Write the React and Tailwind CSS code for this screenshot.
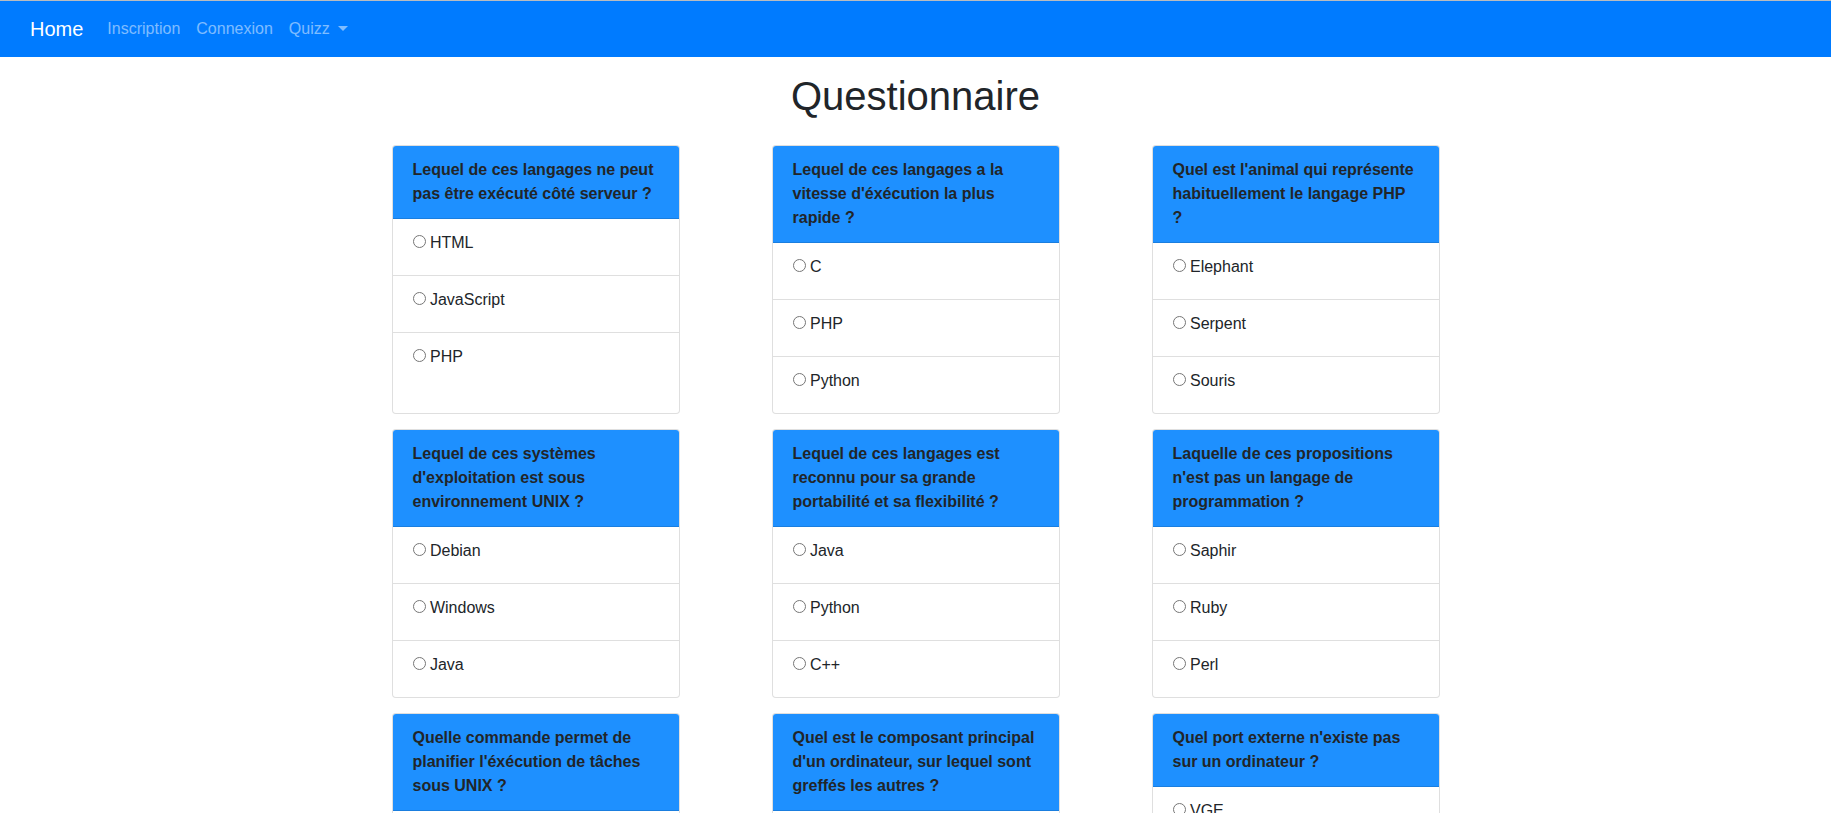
const questions = [
  { title: "Lequel de ces langages ne peut pas être exécuté côté serveur ?", options: ["HTML", "JavaScript", "PHP"] },
  { title: "Lequel de ces langages a la vitesse d'éxécution la plus rapide ?", options: ["C", "PHP", "Python"] },
  { title: "Quel est l'animal qui représente habituellement le langage PHP ?", options: ["Elephant", "Serpent", "Souris"] },
  { title: "Lequel de ces systèmes d'exploitation est sous environnement UNIX ?", options: ["Debian", "Windows", "Java"] },
  { title: "Lequel de ces langages est reconnu pour sa grande portabilité et sa flexibilité ?", options: ["Java", "Python", "C++"] },
  { title: "Laquelle de ces propositions n'est pas un langage de programmation ?", options: ["Saphir", "Ruby", "Perl"] },
  { title: "Quelle commande permet de planifier l'éxécution de tâches sous UNIX ?", options: [] },
  { title: "Quel est le composant principal d'un ordinateur, sur lequel sont greffés les autres ?", options: [] },
  { title: "Quel port externe n'existe pas sur un ordinateur ?", options: ["VGE"] },
];

function NavBar() {
  return (
    <nav className="flex h-[57px] items-center border-t border-[#b9bcc0] bg-[#007bff] px-[30px] text-white/50">
      <a href="#home" className="mr-4 text-xl leading-[30px] text-white">Home</a>
      <a href="#inscription" className="p-2">Inscription</a>
      <a href="#connexion" className="p-2">Connexion</a>
      <button type="button" aria-haspopup="menu" className="flex items-center gap-2 p-2">
        Quizz
        <svg width="10" height="7" viewBox="0 0 10 7" fill="currentColor" aria-hidden="true">
          <path d="M0 0h10L5 5z" />
        </svg>
      </button>
    </nav>
  );
}

function QuestionCard({ index, title, options }) {
  const titleId = `question-${index}`;
  return (
    <section
      role="radiogroup"
      aria-labelledby={titleId}
      className="w-72 rounded border border-black/[.125] bg-white bg-clip-border"
    >
      <h2 id={titleId} className="rounded-t-[3px] border-b border-black/[.125] bg-[#1e90ff] px-5 py-3 font-bold">
        {title}
      </h2>
      <ul className="divide-y divide-black/[.125]">
        {options.map((option) => (
          <li key={option} className="px-5 pt-3 pb-5">
            <label className="block">
              <input type="radio" name={titleId} value={option} /> {option}
            </label>
          </li>
        ))}
      </ul>
    </section>
  );
}

export default function App() {
  return (
    <div className="bg-white font-['Liberation_Sans',Arial,sans-serif] text-base leading-6 text-[#212529]">
      <NavBar />
      <main>
        <h1 className="mt-[15px] mb-[25px] text-center text-[40px] leading-[48px]">Questionnaire</h1>
        <form className="mx-auto grid max-w-[1140px] grid-cols-3 justify-items-center gap-y-[15px]">
          {questions.map((question, index) => (
            <QuestionCard key={question.title} index={index} {...question} />
          ))}
        </form>
      </main>
    </div>
  );
}
